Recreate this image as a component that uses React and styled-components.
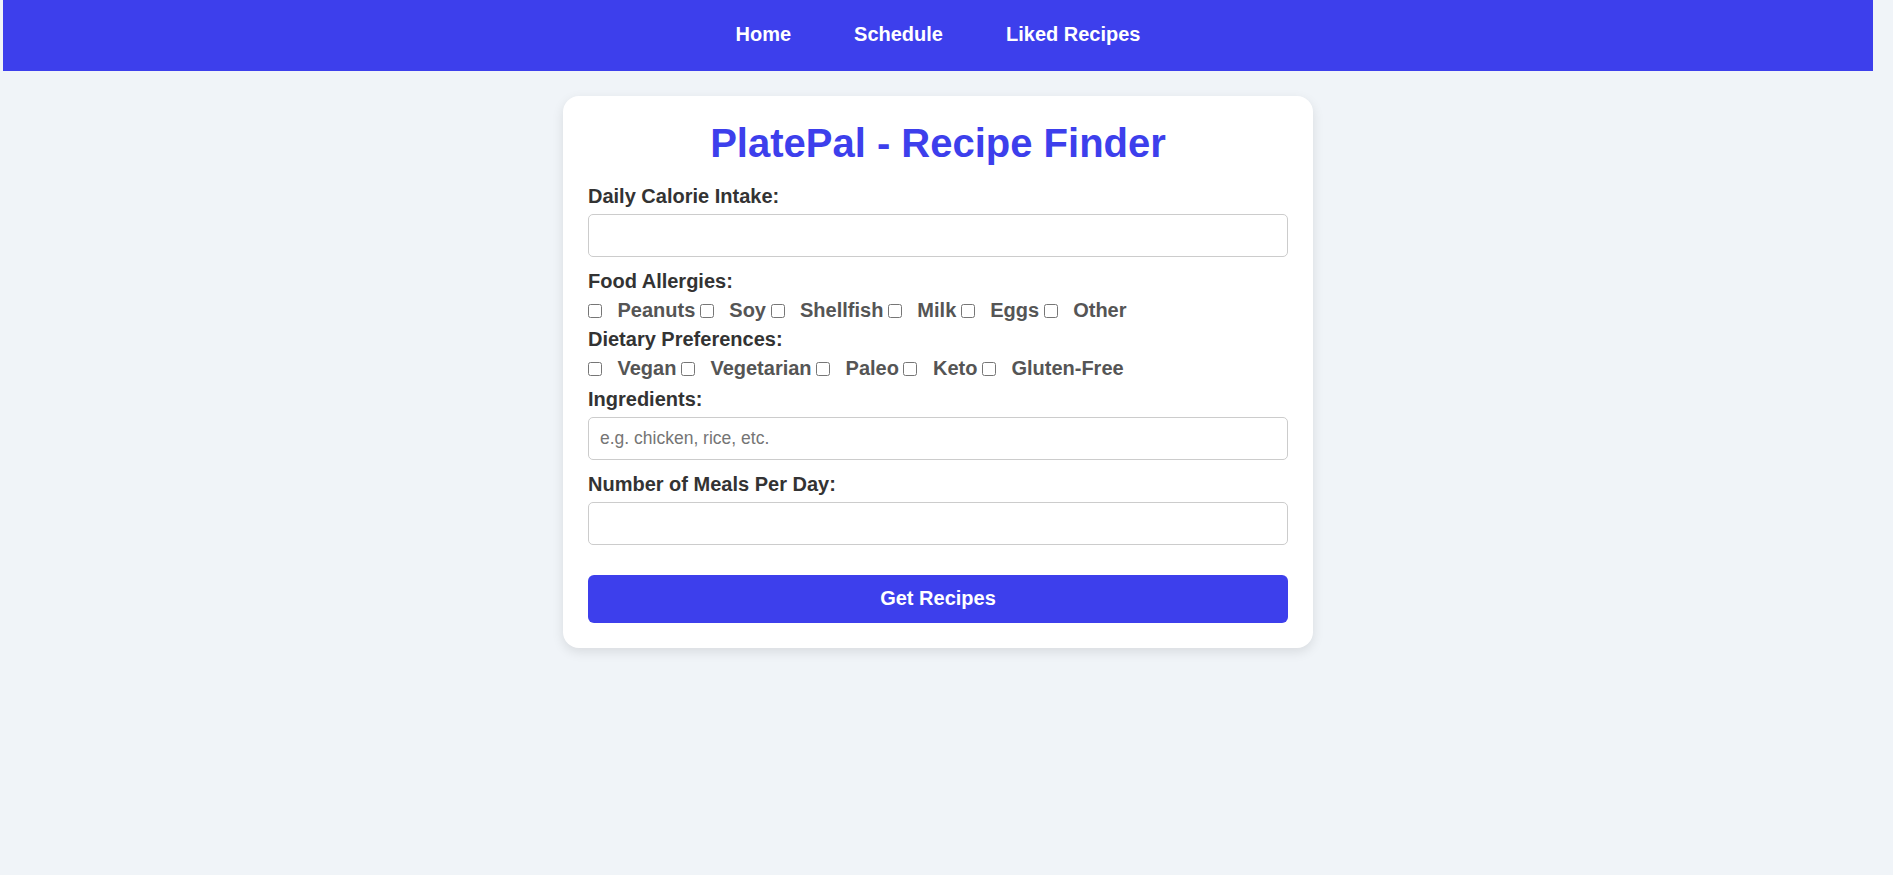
import React from 'react';
import styled, { createGlobalStyle } from 'styled-components';

const GlobalStyle = createGlobalStyle`
  html, body {
    margin: 0;
    padding: 0;
    background: #f0f4f8;
    font-family: Arial, "Liberation Sans", sans-serif;
  }
  * {
    box-sizing: border-box;
  }
`;

const Page = styled.div`
  min-height: 875px;
  padding: 0 20px 0 3px;
`;

const NavBar = styled.nav`
  height: 71px;
  padding-bottom: 2px;
  background: #3d3fec;
  display: flex;
  justify-content: center;
  align-items: center;
  gap: 63px;
`;

const NavLink = styled.a`
  color: #fff;
  font-size: 20px;
  font-weight: bold;
  text-decoration: none;
  line-height: 23px;
  cursor: pointer;
`;

const Card = styled.div`
  width: 750px;
  margin: 25px auto 0;
  background: #fff;
  border-radius: 16px;
  padding: 24px 25px 25px;
  box-shadow: 0 4px 12px rgba(0, 0, 0, 0.1);
`;

const Title = styled.h1`
  margin: 0 0 19px;
  text-align: center;
  color: #3d3fec;
  font-size: 40px;
  line-height: 46px;
  font-weight: bold;
`;

const FieldLabel = styled.label`
  display: block;
  color: #333;
  font-size: 20px;
  line-height: 23px;
  font-weight: bold;
  margin-bottom: 6px;
`;

const TextInput = styled.input`
  display: block;
  width: 100%;
  height: 43px;
  padding: 0 11px;
  margin-bottom: 13px;
  border: 1px solid #ccc;
  border-radius: 5px;
  font-family: Arial, "Liberation Sans", sans-serif;
  font-size: 17.5px;
  color: #333;
  outline: none;

  &::placeholder {
    color: #757575;
  }
`;

const CheckRow = styled.div`
  display: flex;
  align-items: center;
  margin-bottom: ${(p) => p.$gap || 6}px;
`;

const CheckOption = styled.label`
  display: flex;
  align-items: center;
  color: #555;
  font-size: 20px;
  line-height: 23px;
  font-weight: bold;
  margin-right: 4.5px;
`;

const Box = styled.input`
  width: 14px;
  height: 14px;
  margin: 0 15.5px 0 0;
`;

const SubmitButton = styled.button`
  display: block;
  width: 100%;
  height: 48px;
  margin-top: 30px;
  background: #3d3fec;
  color: #fff;
  border: none;
  border-radius: 6px;
  font-family: Arial, "Liberation Sans", sans-serif;
  font-size: 20px;
  font-weight: bold;
  cursor: pointer;
`;

const allergies = ['Peanuts', 'Soy', 'Shellfish', 'Milk', 'Eggs', 'Other'];
const diets = ['Vegan', 'Vegetarian', 'Paleo', 'Keto', 'Gluten-Free'];

const Checks = ({ items, gap }) => (
  <CheckRow $gap={gap}>
    {items.map((item) => (
      <CheckOption key={item}>
        <Box type="checkbox" value={item} />
        {item}
      </CheckOption>
    ))}
  </CheckRow>
);

export default function App() {
  return (
    <Page>
      <GlobalStyle />
      <NavBar>
        <NavLink>Home</NavLink>
        <NavLink>Schedule</NavLink>
        <NavLink>Liked Recipes</NavLink>
      </NavBar>

      <Card>
        <Title>PlatePal - Recipe Finder</Title>

        <FieldLabel>Daily Calorie Intake:</FieldLabel>
        <TextInput type="number" />

        <FieldLabel>Food Allergies:</FieldLabel>
        <Checks items={allergies} />

        <FieldLabel>Dietary Preferences:</FieldLabel>
        <Checks items={diets} gap={7.5} />

        <FieldLabel>Ingredients:</FieldLabel>
        <TextInput type="text" placeholder="e.g. chicken, rice, etc." />

        <FieldLabel>Number of Meals Per Day:</FieldLabel>
        <TextInput type="number" />

        <SubmitButton>Get Recipes</SubmitButton>
      </Card>
    </Page>
  );
}
